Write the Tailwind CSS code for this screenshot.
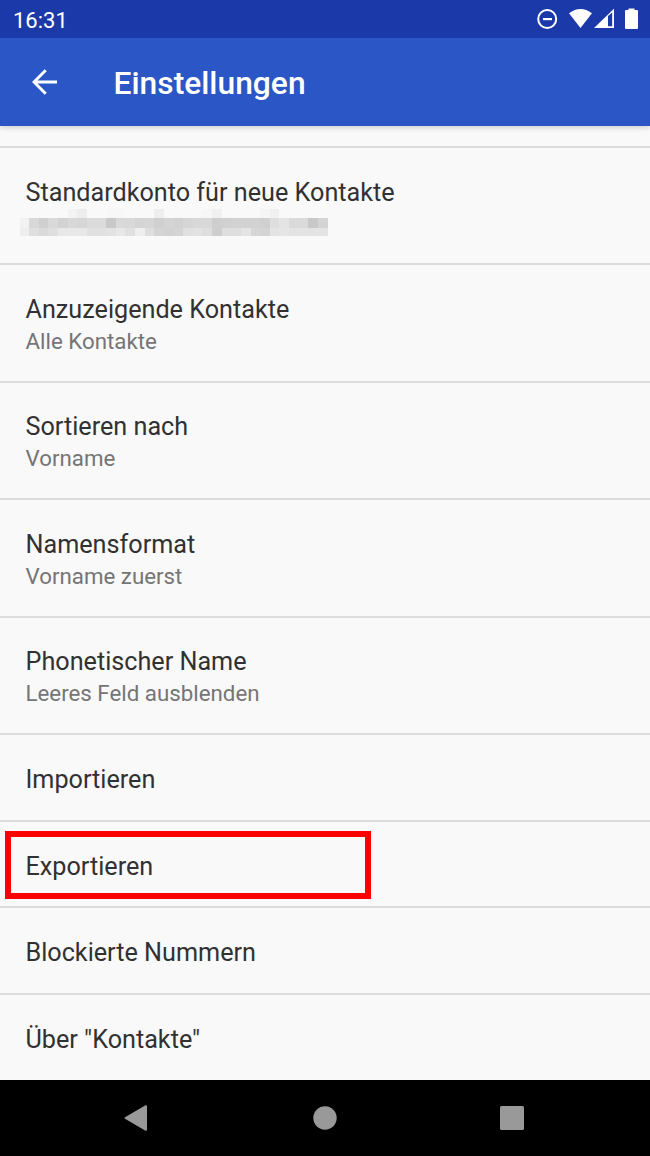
<!DOCTYPE html>
<html lang="de">
<head>
    <meta charset="UTF-8">
    <meta name="viewport" content="width=device-width, initial-scale=1.0">
    <title>Einstellungen</title>
    <script src="https://cdn.jsdelivr.net/npm/@tailwindcss/browser@4"></script>
</head>
<body class="bg-[#f9f9f9] font-['Roboto',sans-serif]">

<div class="flex flex-col w-[650px] h-[1156px] overflow-hidden">
    <!-- Statusleiste -->
    <div class="relative z-10 flex items-center justify-between h-[38px] pl-[13px] pr-3 bg-[#1c39a9] text-white">
        <span class="text-[22px] leading-none pt-[3px]">16:31</span>
        <svg class="w-[102px] h-[38px]" viewBox="536 0 102 38" fill="#fff">
            <circle cx="547.2" cy="19" r="9" fill="none" stroke="#fff" stroke-width="2"/>
            <path d="M543 18h9v2.2h-9z"/>
            <path d="M580.5 28 569 13.3q11.5-8.6 23 0z"/>
            <path fill-rule="evenodd" d="M594 28 614 8.7V28zM608 16V26.200h4.200V12.500z"/>
            <path d="M626 10h2.5V8.5h6V10h2.5q1 0 1 1v17q0 1-1 1h-11q-1 0-1-1V11q0-1 1-1z"/>
        </svg>
    </div>

    <header class="flex items-center shrink-0 h-[88px] pl-8 bg-[#2a56c6] text-white shadow-[0_1px_6px_rgba(0,0,0,0.2)]">
        <svg class="w-[26px] h-[26px]" viewBox="0 0 26 26" fill="none" stroke="#fff" stroke-width="3">
            <path d="M25 13H2.5M13.7 1.2 2 13l11.7 11.8"/>
        </svg>
        <h1 class="ml-[55.5px] pt-1 text-[31.8px] leading-none font-medium">Einstellungen</h1>
    </header>

    <main class="flex flex-col pt-5 h-[954px] text-[#313131] text-[25.2px] leading-[30px]">
        <div class="h-[117.4px] border-t-2 border-[#dcdcdc] px-[25.5px] pt-[30px]">
            <p>Standardkonto für neue Kontakte</p>
            <div id="account" class="grid grid-cols-32 grid-rows-[9px_10px_8px] w-[308px] -ml-1.5 mt-px"></div>
        </div>
        <div class="h-[117.4px] border-t-2 border-[#dcdcdc] px-[25.5px] pt-[29.6px]">
            <p>Anzuzeigende Kontakte</p>
            <p class="mt-[3px] text-[22.3px] leading-[26px] text-[#757575]">Alle Kontakte</p>
        </div>
        <div class="h-[117.4px] border-t-2 border-[#dcdcdc] px-[25.5px] pt-[29.6px]">
            <p>Sortieren nach</p>
            <p class="mt-[3px] text-[22.3px] leading-[26px] text-[#757575]">Vorname</p>
        </div>
        <div class="h-[117.4px] border-t-2 border-[#dcdcdc] px-[25.5px] pt-[29.6px]">
            <p>Namensformat</p>
            <p class="mt-[3px] text-[22.3px] leading-[26px] text-[#757575]">Vorname zuerst</p>
        </div>
        <div class="h-[117.4px] border-t-2 border-[#dcdcdc] px-[25.5px] pt-[29.6px]">
            <p>Phonetischer Name</p>
            <p class="mt-[3px] text-[22.3px] leading-[26px] text-[#757575]">Leeres Feld ausblenden</p>
        </div>
        <div class="h-[86.6px] border-t-2 border-[#dcdcdc] px-[25.5px] pt-[30px]">Importieren</div>
        <div class="relative h-[86.6px] border-t-2 border-[#dcdcdc] px-[25.5px] pt-[30px]">
            Exportieren
            <!-- Markierung -->
            <div class="absolute left-[5px] top-[9.5px] w-[366px] h-[68px] border-6 border-[#fe0000]"></div>
        </div>
        <div class="h-[86.6px] border-t-2 border-[#dcdcdc] px-[25.5px] pt-[30px]">Blockierte Nummern</div>
        <div class="h-[86.6px] border-t-2 border-[#dcdcdc] px-[25.5px] pt-[30px]">Über "Kontakte"</div>
    </main>

    <!-- Navigationsleiste -->
    <nav class="h-[76px] bg-black">
        <svg class="w-[650px] h-[76px]" viewBox="0 0 650 76" fill="#999">
            <path d="M125.5 38 146 26.2V49.8z" stroke="#999" stroke-width="2" stroke-linejoin="round"/>
            <circle cx="325" cy="38" r="11.7"/>
            <rect x="500" y="26" width="24" height="24" rx="1.5"/>
        </svg>
    </nav>
</div>

<script>
    // Graustufen der verpixelten Kontoadresse, eine Zeile pro Reihe
    const rows = [
        [249,249,249,249,249,243,237,249,249,247,247,249,249,249,238,249,249,249,249,246,240,249,249,249,249,245,240,249,249,249,249,249],
        [242,216,208,217,210,216,214,219,219,200,217,216,212,214,208,212,210,214,216,216,206,208,210,210,210,208,222,228,218,218,200,212],
        [238,223,218,223,232,232,232,224,224,226,232,224,238,222,212,210,212,224,226,222,206,222,222,228,214,212,228,230,228,228,228,228],
    ];
    document.getElementById('account').innerHTML = rows.flat().map(v => `<i style="background:rgb(${v},${v},${v})"></i>`).join('');
</script>

</body>
</html>
